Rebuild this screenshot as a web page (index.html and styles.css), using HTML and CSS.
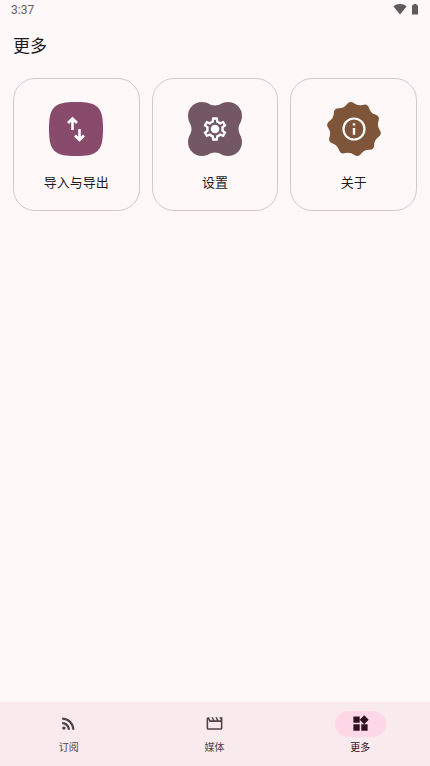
FILE: index.html
```html
<!DOCTYPE html>
<html lang="zh-CN">
<head>
<meta charset="utf-8">
<meta name="viewport" content="width=device-width, initial-scale=1">
<title>更多</title>
<link rel="stylesheet" href="styles.css">
</head>
<body>
<div class="status">
  <span>3:37</span>
  <div class="status-icons">
    <svg width="14" height="12" viewBox="0 0 14 12" aria-hidden="true"><path d="M7 11.500L.5 3.500C4 .3 10 .3 13.500 3.500z"/></svg>
    <svg width="6" height="12" viewBox="0 0 6 12" aria-hidden="true"><path d="M1.500 1h3v1.200H6V11.500H0V2.200h1.500z"/></svg>
  </div>
</div>
<header class="title-bar"><h1>更多</h1></header>
<main class="cards">
  <button class="card" type="button">
    <svg class="badge" viewBox="-27 -27 54 54" aria-hidden="true">
      <path fill="#884b6b" d="M0-27C22-27 27-22 27 0S22 27 0 27-27 22-27 0-22-27 0-27z"/>
      <path class="arrows" d="M-3.500 1V-10M-8-6L-3.500-10.500 1-6M3.500 0V10.500M-1 6.500L3.500 11 8 6.500"/>
    </svg>
    <span>导入与导出</span>
  </button>
  <button class="card" type="button">
    <svg class="badge" viewBox="0 0 54 54" aria-hidden="true">
      <path fill="#735763" d="M14 0C20 0 22 3.500 27 3.500S34 0 40 0A14 14 0 0 1 54 14C54 20 50.500 22 50.500 27S54 34 54 40A14 14 0 0 1 40 54C34 54 32 50.500 27 50.500S20 54 14 54A14 14 0 0 1 0 40C0 34 3.500 32 3.500 27S0 20 0 14A14 14 0 0 1 14 0z"/>
      <svg x="13" y="13" width="28" height="28" viewBox="0 0 24 24" fill="#fff">
        <path d="M19.430 12.980c.04-.32.07-.64.07-.98 0-.34-.03-.66-.07-.98l2.110-1.650c.19-.15.24-.42.12-.64l-2-3.460c-.09-.16-.26-.25-.44-.25-.06 0-.12.010-.17.030l-2.490 1c-.52-.4-1.080-.73-1.690-.98l-.38-2.650C14.460 2.180 14.250 2 14 2h-4c-.25 0-.46.18-.49.42l-.38 2.650c-.61.25-1.170.59-1.690.98l-2.490-1c-.06-.02-.12-.03-.18-.03-.17 0-.34.09-.43.25l-2 3.460c-.13.22-.07.49.12.64l2.110 1.650c-.04.32-.07.65-.07.98 0 .33.030.66.070.98l-2.110 1.650c-.19.15-.24.42-.12.64l2 3.460c.09.16.26.25.44.25.06 0 .12-.01.17-.03l2.490-1c.52.4 1.080.73 1.690.98l.38 2.650c.03.24.24.42.49.42h4c.25 0 .46-.18.49-.42l.38-2.650c.61-.25 1.170-.59 1.690-.98l2.490 1c.06.020.12.030.18.030.17 0 .34-.09.43-.25l2-3.460c.12-.22.070-.49-.12-.64l-2.110-1.650zm-1.980-1.710c.04.31.05.52.05.73 0 .21-.02.43-.05.73l-.14 1.130.89.7 1.080.84-.7 1.210-1.270-.51-1.040-.42-.9.68c-.43.32-.84.56-1.250.73l-1.060.43-.16 1.130-.2 1.350h-1.400l-.19-1.350-.16-1.130-1.060-.43c-.43-.18-.83-.41-1.230-.71l-.91-.7-1.060.43-1.270.51-.7-1.210 1.080-.84.89-.7-.14-1.130c-.03-.31-.05-.54-.05-.74s.02-.43.05-.73l.14-1.130-.89-.7-1.080-.84.7-1.210 1.270.51 1.040.42.9-.68c.43-.32.84-.56 1.250-.73l1.060-.43.16-1.130.2-1.350h1.390l.19 1.350.16 1.130 1.060.43c.43.18.83.41 1.230.71l.91.7 1.060-.43 1.270-.51.7 1.210-1.070.85-.89.7.14 1.130z"/>
        <circle cx="12" cy="12" r="3.700"/>
      </svg>
    </svg>
    <span>设置</span>
  </button>
  <button class="card" type="button">
    <svg class="badge" viewBox="-27 -27 54 54" aria-hidden="true">
      <path fill="#7f5539" d="M0-25.700Q4-22.700 8.800-24.100Q13.600-25.600 15.100-20.800Q16.500-16 21.300-14.400Q26.100-12.700 24.500-8Q22.800-3.200 25.700.9Q28.600 5 24.500 7.900Q20.300 10.800 20.200 15.900Q20.100 20.900 15.100 20.800Q10.100 20.700 7.100 24.700Q4 28.700 0 25.700Q-4 22.700-8.800 24.100Q-13.600 25.600-15.100 20.800Q-16.500 16-21.300 14.400Q-26.100 12.700-24.500 8Q-22.800 3.200-25.700-.9Q-28.600-5-24.500-7.900Q-20.300-10.800-20.200-15.900Q-20.100-20.900-15.100-20.800Q-10.100-20.700-7.100-24.700Q-4-28.700 0-25.700z"/>
      <circle r="10.500" fill="none" stroke="#fff" stroke-width="2.200"/>
      <path fill="#fff" d="M-1.200-5.800h2.400v2.400h-2.400zM-1.200-1h2.400v6.800h-2.400z"/>
    </svg>
    <span>关于</span>
  </button>
</main>
<nav class="nav">
  <a class="tab" href="#subscriptions">
    <span class="pill"><svg viewBox="0 0 24 24" aria-hidden="true"><circle cx="6.180" cy="17.820" r="2.180"/><path d="M4 4.440v2.830c7.030 0 12.730 5.700 12.730 12.730h2.830c0-8.590-6.970-15.560-15.560-15.560zm0 5.660v2.830c3.900 0 7.070 3.170 7.070 7.070h2.830c0-5.470-4.430-9.900-9.900-9.900z"/></svg></span>
    <span>订阅</span>
  </a>
  <a class="tab" href="#media">
    <span class="pill"><svg viewBox="0 0 24 24" aria-hidden="true"><path d="M4 6.470L5.760 10H20v8H4V6.470M22 4h-4l2 4h-3l-2-4h-2l2 4h-3l-2-4H8l2 4H7L5 4H4c-1.100 0-1.990.9-1.990 2L2 18c0 1.100.9 2 2 2h16c1.100 0 2-.9 2-2V4z"/></svg></span>
    <span>媒体</span>
  </a>
  <a class="tab active" href="#more" aria-current="page">
    <span class="pill"><svg viewBox="0 0 24 24" aria-hidden="true"><path d="M13 13v8h8v-8h-8zM3 21h8v-8H3v8zM3 3v8h8V3H3zm13.660-1.310L11 7.340 16.660 13l5.660-5.660-5.660-5.650z"/></svg></span>
    <span>更多</span>
  </a>
</nav>
</body>
</html>
```
FILE: styles.css
```css
* {
  box-sizing: border-box;
}

body {
  margin: 0;
  min-height: 100vh;
  display: flex;
  flex-direction: column;
  background: #fff8f8;
  color: #211a1d;
  font-family: Roboto, "Noto Sans CJK SC", sans-serif;
}

.status {
  display: flex;
  justify-content: space-between;
  align-items: center;
  height: 20px;
  padding: 0 12px 0 11px;
  color: #666163;
  font-size: 12px;
  line-height: 20px;
}

.status-icons {
  display: flex;
  gap: 5px;
  padding-bottom: 2px;
  fill: #5f5a5c;
}

.title-bar {
  padding: 13px 13px 0;
}

h1 {
  margin: 0;
  font-size: 17px;
  line-height: 26px;
  font-weight: 400;
}

.cards {
  flex: 1;
  display: grid;
  grid-template-columns: repeat(3, 1fr);
  align-items: start;
  gap: 12px;
  padding: 19px 13px;
}

.card {
  display: flex;
  flex-direction: column;
  align-items: center;
  gap: 17px;
  padding: 23px 8px 17px;
  border: 1px solid #d3c8cc;
  border-radius: 22px;
  background: transparent;
  color: inherit;
  font: inherit;
  font-size: 13px;
  line-height: 20px;
}

.badge {
  width: 54px;
  height: 54px;
}

.arrows {
  fill: none;
  stroke: #fff;
  stroke-width: 2.6;
}

.nav {
  display: grid;
  grid-template-columns: repeat(3, 1fr);
  gap: 8px;
  height: 64px;
  padding: 9px 1px 0 0;
  background: #f8eaed;
}

.tab {
  display: flex;
  flex-direction: column;
  align-items: center;
  gap: 3px;
  color: #504348;
  font-size: 10px;
  font-weight: 400;
  line-height: 16px;
  text-decoration: none;
}

.pill {
  display: flex;
  align-items: center;
  justify-content: center;
  width: 51px;
  height: 26px;
  padding-bottom: 1px;
  border-radius: 13px;
}

.pill svg {
  width: 19px;
  height: 19px;
  fill: currentColor;
}

.active {
  color: #30111f;
}

.active .pill {
  background: #ffd8e7;
}
```
